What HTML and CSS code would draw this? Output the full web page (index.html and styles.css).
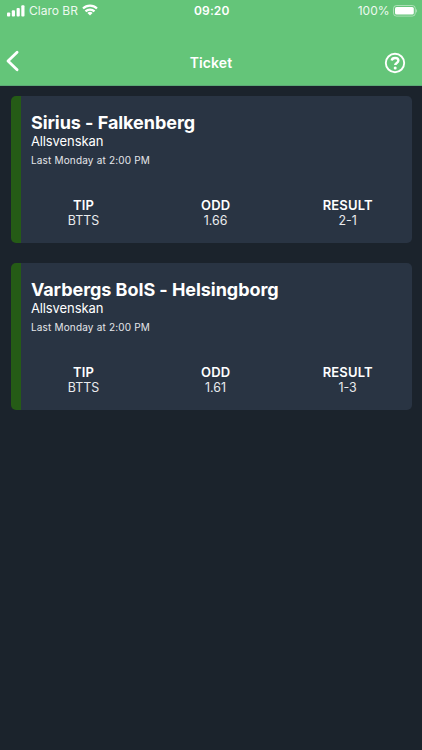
FILE: index.html
```html
<!DOCTYPE html>
<html lang="en">
<head>
  <meta charset="UTF-8" />
  <meta name="viewport" content="width=device-width, initial-scale=1.0"/>
  <title>Ticket</title>
  <link rel="stylesheet" href="styles.css">
</head>
<body>
  <header>
    <div class="status-bar">
      <div class="carrier">
        <svg class="signal" width="18" height="12" viewBox="0 0 18 12" fill="#fff">
          <rect x="0" y="7.4" width="3.2" height="4" rx="0.9"/>
          <rect x="4.8" y="5.3" width="3.2" height="6.1" rx="0.9"/>
          <rect x="9.6" y="3" width="3.2" height="8.4" rx="0.9"/>
          <rect x="14.3" y="0.3" width="3.2" height="11.1" rx="0.9"/>
        </svg>
        <span class="carrier-name">Claro BR</span>
        <svg class="wifi" width="16" height="12" viewBox="0 0 16 12" fill="none" stroke="#fff" stroke-width="2.2">
          <path d="M1 4.5a10 10 0 0 1 14 0"/>
          <path d="M3.5 7.4a6.4 6.4 0 0 1 9 0"/>
          <path d="M8 11.6L5.4 9.1a3.7 3.7 0 0 1 5.2 0z" fill="#fff" stroke="none"/>
        </svg>
      </div>
      <div class="time">09:20</div>
      <div class="battery">
        <span class="percent">100%</span>
        <svg width="25" height="12" viewBox="0 0 25 12">
          <rect x="0.5" y="0.5" width="21.8" height="10.6" rx="3" fill="none" stroke="#fff" stroke-opacity="0.45"/>
          <rect x="2" y="2" width="18.8" height="7.6" rx="1.6" fill="#fff"/>
          <path d="M23.2 3.9v3.8c1.2-.5 1.2-3.3 0-3.8z" fill="#fff" fill-opacity="0.5"/>
        </svg>
      </div>
    </div>
    <nav class="nav-bar">
      <a class="back" href="#" aria-label="Back">
        <svg width="14" height="22" viewBox="0 0 14 22" fill="none" stroke="#fff" stroke-width="2.8" stroke-linecap="round" stroke-linejoin="round">
          <path d="M11.1 2.2L2 11l9.1 8.8"/>
        </svg>
      </a>
      <h1>Ticket</h1>
      <a class="help" href="#" aria-label="Help">
        <svg width="22" height="22" viewBox="0 0 22 22" fill="none" stroke="#fff">
          <circle cx="11" cy="11" r="9.2" stroke-width="1.9"/>
          <path d="M7.7 8.5C8 6.8 9.3 6 11.1 6c1.9 0 3.3 1 3.3 2.6 0 2.4-3.2 2.3-3.2 4.5" stroke-width="2.4"/>
          <circle cx="11.2" cy="15.9" r="1.5" fill="#fff" stroke="none"/>
        </svg>
      </a>
    </nav>
  </header>

  <main class="tickets">
    <article class="card">
      <h2>Sirius - Falkenberg</h2>
      <p class="league">Allsvenskan</p>
      <p class="date">Last Monday at 2:00 PM</p>
      <div class="stats">
        <div class="stat"><strong>TIP</strong><span>BTTS</span></div>
        <div class="stat"><strong>ODD</strong><span>1.66</span></div>
        <div class="stat"><strong>RESULT</strong><span>2-1</span></div>
      </div>
    </article>

    <article class="card">
      <h2>Varbergs BoIS - Helsingborg</h2>
      <p class="league">Allsvenskan</p>
      <p class="date">Last Monday at 2:00 PM</p>
      <div class="stats">
        <div class="stat"><strong>TIP</strong><span>BTTS</span></div>
        <div class="stat"><strong>ODD</strong><span>1.61</span></div>
        <div class="stat"><strong>RESULT</strong><span>1-3</span></div>
      </div>
    </article>
  </main>
</body>
</html>
```
FILE: styles.css
```css
* {
  box-sizing: border-box;
}
body {
  margin: 0;
  min-height: 100vh;
  font-family: Inter, 'Liberation Sans', sans-serif;
  background-color: #1b232c;
  color: #fff;
}
header {
  height: 86px;
  background-color: #64c579;
  border-bottom: 1px solid #5cab76;
}
.status-bar {
  display: grid;
  grid-template-columns: 1fr auto 1fr;
  align-items: center;
  height: 22px;
  padding: 0 4.5px 0 7px;
  font-size: 12px;
  line-height: 14px;
}
.carrier {
  display: flex;
  align-items: center;
}
.signal {
  margin-top: -1px;
}
.carrier-name {
  margin-left: 4px;
  margin-top: -1px;
  color: #edf9ef;
}
.wifi {
  margin-left: 4.5px;
  margin-top: -2px;
}
.time {
  margin-top: -1px;
  padding-right: 1px;
  font-weight: 600;
  letter-spacing: 0.1px;
}
.battery {
  display: flex;
  align-items: center;
  justify-content: flex-end;
  gap: 3px;
}
.battery svg {
  margin-top: -1px;
}
.percent {
  margin-top: -1px;
  color: #edf9ef;
}
.nav-bar {
  display: grid;
  grid-template-columns: 1fr auto 1fr;
  align-items: center;
  height: 63px;
  padding: 17px 16px 0;
}
.nav-bar a {
  display: flex;
}
.back {
  margin: -3px 0 0 -10px;
}
.help {
  justify-self: end;
  margin-top: 1px;
}
h1 {
  margin: 1px 0 0;
  font-size: 14px;
  line-height: 18px;
  font-weight: 600;
  letter-spacing: 0.1px;
}
.tickets {
  display: flex;
  flex-direction: column;
  gap: 20.7px;
  padding: 10px 10.5px;
}
.card {
  height: 146.8px;
  padding: 16px 10px 0 10.4px;
  border-left: 10.5px solid #255b16;
  border-radius: 5px;
  background-color: #293443;
}
.card h2 {
  margin: 0;
  font-size: 18px;
  line-height: 22px;
  font-weight: 700;
  letter-spacing: -0.05px;
}
.card p {
  margin: 0;
}
.league {
  font-size: 13px;
  line-height: 15px;
  letter-spacing: -0.1px;
}
.date {
  padding-top: 4px;
  font-size: 10px;
  line-height: 15px;
  letter-spacing: 0.18px;
  color: #e4e6ea;
}
.stats {
  display: flex;
  margin: 29px -12.2px 0 -13.4px;
}
.stat {
  flex: 1;
  display: flex;
  flex-direction: column;
  align-items: center;
  font-size: 13px;
  line-height: 16px;
}
.stat strong {
  font-weight: 600;
  letter-spacing: 0.15px;
}
.stat span {
  font-size: 12.4px;
  line-height: 15px;
  color: #e9ebee;
}
```
